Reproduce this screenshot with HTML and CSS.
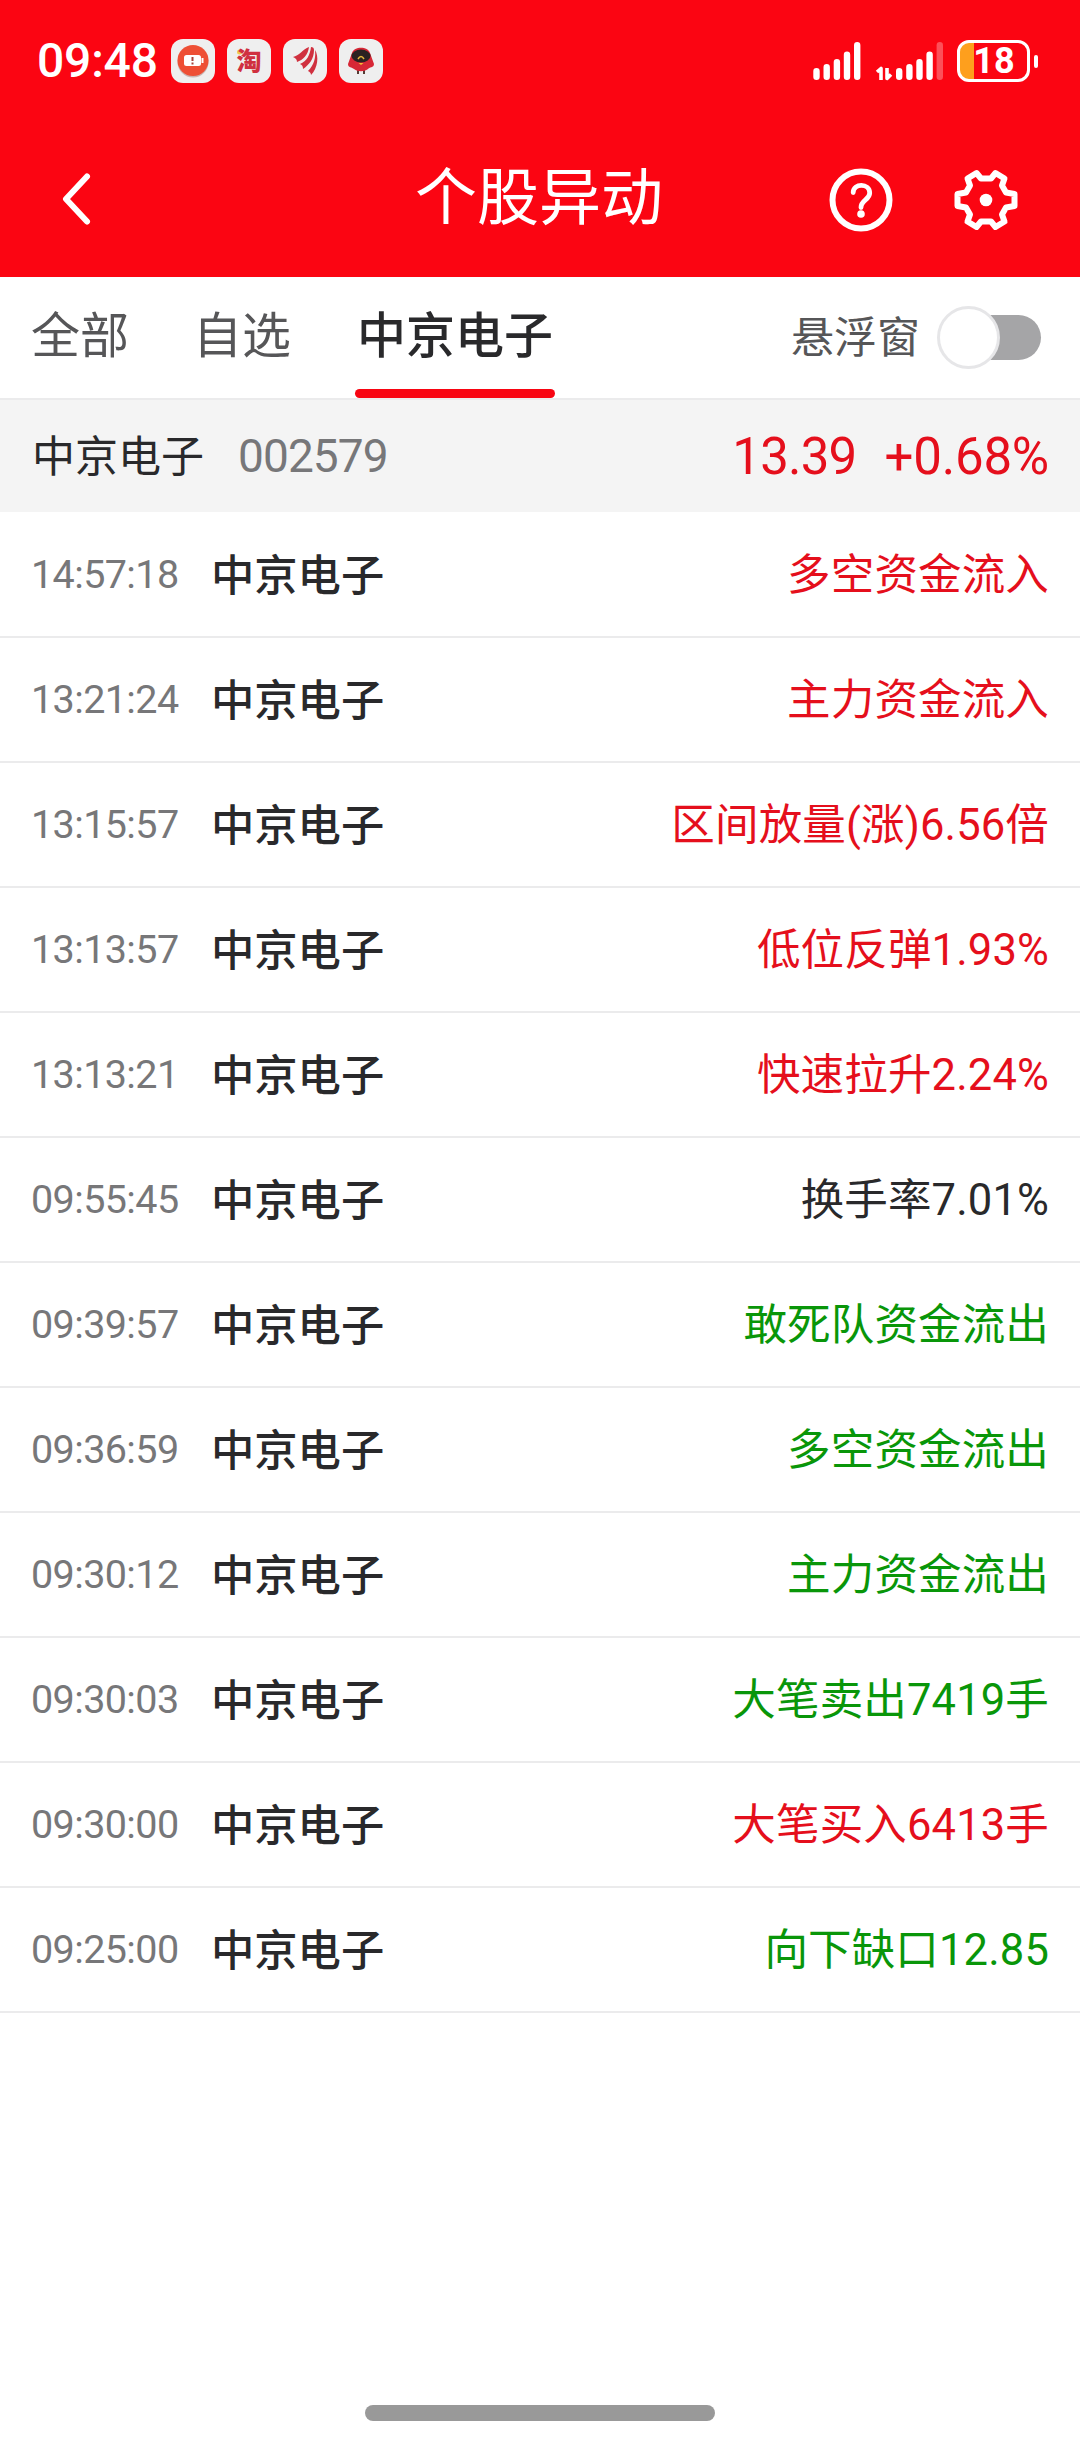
FILE: index.html
```html
<!DOCTYPE html>
<html lang="zh-CN">
<head>
<meta charset="utf-8">
<title>个股异动</title>
<link rel="stylesheet" href="styles.css">
</head>
<body>
<header class="top">
  <div class="status">
    <span class="clock">09:48</span>
    <div class="apps">
      <svg class="app" viewBox="0 0 44 44"><rect width="44" height="44" rx="12" fill="#efefef"/><circle cx="22" cy="23" r="15.500" fill="#c9b5b2"/><circle cx="22" cy="21.500" r="15.500" fill="#ee4f35"/><rect x="13" y="16" width="17" height="11" rx="2.500" fill="#fff"/><path d="M31.500 19v5" stroke="#fff" stroke-width="2"/><path d="M21.500 18v4M21.500 23.500v2" stroke="#a9423a" stroke-width="2"/></svg>
      <svg class="app" viewBox="0 0 44 44"><rect width="44" height="44" rx="12" fill="#efefef"/><circle cx="12.500" cy="13" r="2.500" fill="#f2c84b"/><text x="22" y="31" text-anchor="middle" class="tao">淘</text></svg>
      <svg class="app" viewBox="0 0 44 44"><rect width="44" height="44" rx="12" fill="#efefef"/><path d="M10 18C16 17 20 10 26 8c-1 8-6 13-12 15 0-3-2-4-4-5zM17 25C24 22 27 16 28 8c2 0 3 1 3 3 0 9-5 15-11 19 0-3-1-4-3-5zM25 32c6-6 8-13 7-21 4 6 3 18-4 25 0-2-1-3-3-4z" fill="#d0303f"/></svg>
      <svg class="app" viewBox="0 0 44 44"><rect width="44" height="44" rx="12" fill="#efefef"/><path d="M19 31v4M25 31v4" stroke="#553b35" stroke-width="2"/><path d="M13 14C15 7 29 7 31 14l4 11c0 4-5 3-6 5-4 3-10 3-14 0-2-2-6-1-6-5z" fill="#d72736"/><ellipse cx="22" cy="17" rx="9.500" ry="6.500" fill="#2b2221"/><path d="M19 20q3-5 6 0" fill="none" stroke="#e5b63d" stroke-width="1.500"/><path d="M19.500 24h5L22 26z" fill="#f6bd35"/></svg>
    </div>
    <div class="system">
      <svg class="signals" width="132" height="44" viewBox="0 0 132 44" fill="none" stroke="#fff" stroke-width="6.400" stroke-linecap="round"><path d="M4.500 32.300v5.500M14.700 28.200v9.600M24.900 23.200v14.600M35 15.700v22.100M45.200 6.200v31.600M87.200 32.300v5.500M97.400 28.200v9.600M107.500 23.200v14.600M117.600 15.700v22.100"/><path d="M127.800 6.200v31.600" opacity=".3"/><path d="M65 33l4-3.500V41M75 29v10.500l4-4" stroke-width="3.600" stroke-linecap="butt" stroke-linejoin="round"/></svg>
      <div class="battery"><span>18</span></div>
      <i class="nub"></i>
    </div>
  </div>
  <nav class="bar">
    <svg class="back" width="36" height="60" viewBox="0 0 36 60"><path d="M29 7.500 8 30 29 52.500" fill="none" stroke="#fff" stroke-width="6" stroke-linecap="round" stroke-linejoin="round"/></svg>
    <h1>个股异动</h1>
    <div class="actions">
      <svg width="64" height="64" viewBox="0 0 64 64" fill="none" stroke="#fff"><circle cx="32" cy="32" r="28.500" stroke-width="6"/><path d="M24.200 24.500c0-9.500 16.500-9.500 16.500 .5 0 7-8.700 7-8.700 14.500" stroke-width="4.800" stroke-linecap="round"/><circle cx="32" cy="46" r="3.800" fill="#fff" stroke="none"/></svg>
      <svg width="64" height="64" viewBox="-32 -32 64 64"><path d="M-5-21.500H5L9.500-27 18.500-21.500 16-14.500 20-7.500 28.500-6V6L20 7.500 16 14.500 18.500 21.500 9.500 27 5 21.500H-5L-9.500 27-18.500 21.500-16 14.500-20 7.500-28.500 6V-6L-20-7.500-16-14.500-18.500-21.500-9.500-27Z" fill="none" stroke="#fff" stroke-width="6" stroke-linejoin="round"/><circle r="6.300" fill="#fff"/></svg>
    </div>
  </nav>
</header>
<section class="tabs">
  <span class="tab">全部</span><span class="tab">自选</span><span class="tab active">中京电子</span>
  <div class="float"><span class="label">悬浮窗</span><span class="switch"><i></i></span></div>
</section>
<section class="quote">
  <span class="qname">中京电子</span><span class="code">002579</span>
  <span class="price">13.39</span><span class="change">+0.68%</span>
</section>
<ul class="list">
  <li><time>14:57:18</time><b>中京电子</b><span class="up">多空资金流入</span></li>
  <li><time>13:21:24</time><b>中京电子</b><span class="up">主力资金流入</span></li>
  <li><time>13:15:57</time><b>中京电子</b><span class="up">区间放量(涨)6.56倍</span></li>
  <li><time>13:13:57</time><b>中京电子</b><span class="up">低位反弹1.93%</span></li>
  <li><time>13:13:21</time><b>中京电子</b><span class="up">快速拉升2.24%</span></li>
  <li><time>09:55:45</time><b>中京电子</b><span>换手率7.01%</span></li>
  <li><time>09:39:57</time><b>中京电子</b><span class="down">敢死队资金流出</span></li>
  <li><time>09:36:59</time><b>中京电子</b><span class="down">多空资金流出</span></li>
  <li><time>09:30:12</time><b>中京电子</b><span class="down">主力资金流出</span></li>
  <li><time>09:30:03</time><b>中京电子</b><span class="down">大笔卖出7419手</span></li>
  <li><time>09:30:00</time><b>中京电子</b><span class="up">大笔买入6413手</span></li>
  <li><time>09:25:00</time><b>中京电子</b><span class="down">向下缺口12.85</span></li>
</ul>
<footer class="home"><i></i></footer>
</body>
</html>
```
FILE: styles.css
```css
* { box-sizing: border-box; }
body {
  margin: 0;
  width: 1080px;
  height: 2440px;
  display: flex;
  flex-direction: column;
  background: #fff;
  color: #29292b;
  font-family: Roboto, "Noto Sans CJK SC", sans-serif;
  white-space: nowrap;
  overflow: hidden;
}
.top { height: 277px; background: #fb0512; color: #fff; }
.status { height: 122px; display: flex; align-items: center; padding-left: 37px; padding-right: 42px; }
.clock { width: 134px; font-size: 48px; font-weight: 500; line-height: 56px; letter-spacing: -.2px; }
.apps { display: flex; gap: 12px; }
.app { width: 44px; height: 44px; }
.tao { font: 900 25px "Noto Sans CJK SC", sans-serif; fill: #d0303f; }
.system { margin-left: auto; display: flex; align-items: center; }
.signals { margin-right: 13px; }
.battery {
  width: 73px; height: 42px; border: 3px solid #fff; border-radius: 12px;
  background: linear-gradient(90deg, #fe9f1d 14px, #fb0512 14px);
  display: flex; justify-content: center; align-items: center;
  font-size: 36px; font-weight: 700; line-height: 36px;
}
.battery span { padding-left: 1px; }
.nub { width: 4px; height: 13px; margin-left: 4px; border-radius: 2px; background: #fff; }
.bar { height: 155px; display: grid; grid-template-columns: 1fr auto 1fr; align-items: center; padding: 0 62px 0 58px; }
.back { margin-bottom: 1px; }
h1 { margin: 0 -2px 2px 0; font-size: 62px; font-weight: 400; line-height: 80px; }
.actions { display: flex; justify-content: flex-end; gap: 61px; }
.tabs { height: 123px; padding: 0 39px 0 31px; border-bottom: 2px solid #ebebec; display: flex; align-items: stretch; }
.tab { margin-right: 64px; font-size: 49px; line-height: 119px; color: #565658; }
.tab.active { width: 200px; text-align: center; margin: 0; color: #29292b; font-weight: 500; display: flex; flex-direction: column; }
.tab.active::after { content: ""; height: 9px; margin-top: -7px; border-radius: 4.5px; background: #f80512; }
.float { margin-left: auto; display: flex; align-items: center; font-size: 43px; color: #565658; }
.label { padding-bottom: 7px; }
.switch { width: 104px; height: 63px; margin-left: 17px; display: flex; align-items: center; }
.switch i { width: 63px; height: 63px; border: 3px solid #e6e6e8; border-radius: 50%; background: #fff; z-index: 1; }
.switch::after { content: ""; width: 72px; height: 45px; margin-left: -31px; border-radius: 22.5px; background: #a5a5a7; }
.quote { height: 112px; padding: 0 31px 0 32px; display: flex; align-items: center; background: #f4f4f4; }
.qname { font-size: 43px; padding-bottom: 6px; }
.code { margin-left: 34px; font-size: 46px; letter-spacing: -.9px; color: #777779; }
.price { margin-left: auto; font-size: 51px; letter-spacing: -.8px; color: #e50f1c; }
.change { margin-left: 28px; font-size: 51px; letter-spacing: -.2px; color: #e50f1c; }
.list { margin: 0; padding: 1px 0 0; list-style: none; }
.list li { height: 125px; padding: 0 31px; border-bottom: 2px solid #ebebec; display: flex; align-items: center; font-size: 43.5px; }
time { width: 180px; font-size: 39.5px; letter-spacing: -.6px; color: #777779; }
b { font-weight: 500; font-size: 43.3px; padding-bottom: 6px; }
.list span { margin-left: auto; padding-bottom: 6px; letter-spacing: .15px; }
.up { color: #e50f1c; }
.down { color: #099609; }
.home { margin-top: auto; height: 35px; display: flex; justify-content: center; }
.home i { width: 350px; height: 16px; border-radius: 8px; background: #999; }
```
